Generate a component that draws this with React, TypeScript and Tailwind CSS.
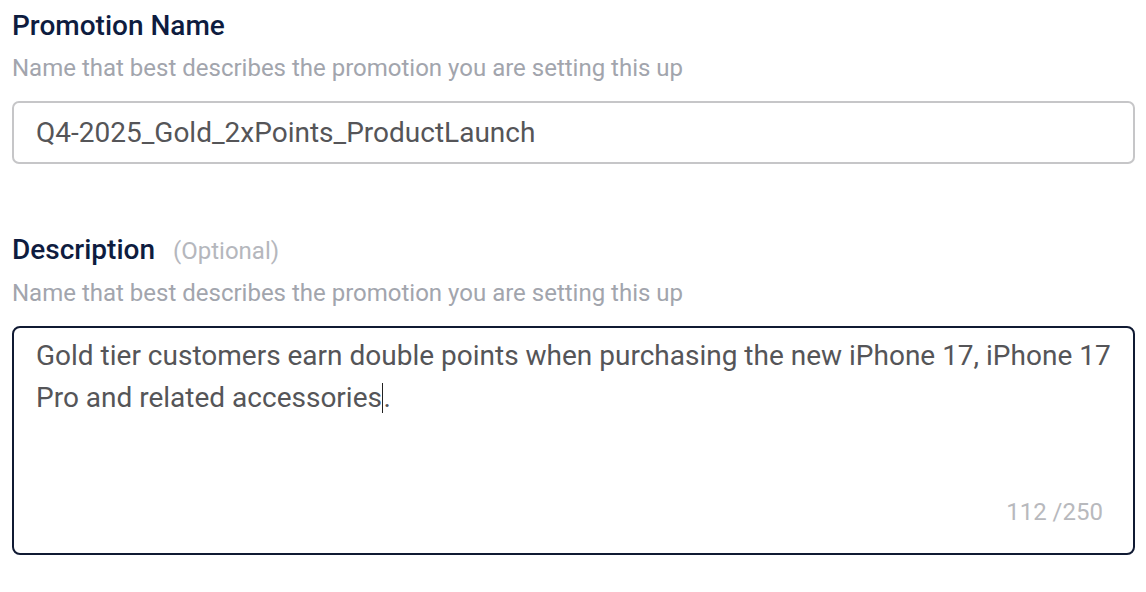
import React from "react";

const Field = ({
    label,
    optional,
    hint,
    children,
}: {
    label: string;
    optional?: boolean;
    hint: string;
    children: React.ReactNode;
}) => {
    return (
        <div className="flex flex-col">
            <div className="flex items-baseline gap-[18px]">
                <h2 className="text-[28px] leading-[36px] font-medium text-[#0e1c3f]">{label}</h2>
                {optional && <span className="text-[24px] leading-[36px] text-[#b5b7bd]">(Optional)</span>}
            </div>
            <p className="text-[24px] leading-[32px] text-[#a2a5ad] mt-[8px] mb-[17px]">{hint}</p>
            {children}
        </div>
    );
};

export default function App() {
    return (
        <div className="w-[1146px] h-[592px] bg-white px-[12px] pt-[8px] font-['Roboto',sans-serif] overflow-hidden flex flex-col gap-[68px]">
            <Field label="Promotion Name" hint="Name that best describes the promotion you are setting this up">
                <div className="h-[63px] w-[1123px] border-2 border-[#c6c6c8] rounded-[7px] flex items-center pl-[22px]">
                    <span className="text-[28px] text-[#555558]">Q4-2025_Gold_2xPoints_ProductLaunch</span>
                </div>
            </Field>
            <Field label="Description" optional hint="Name that best describes the promotion you are setting this up">
                <div className="h-[229px] w-[1123px] border-2 border-[#101a33] rounded-[8px] flex flex-col px-[22px] pt-[7px] pb-[27px]">
                    <div className="text-[28px] leading-[42px] text-[#555558] whitespace-nowrap">
                        <div>Gold tier customers earn double points when purchasing the new iPhone 17, iPhone 17</div>
                        <div>
                            Pro and related accessories
                            <span className="inline-block w-[1.5px] h-[30px] bg-[#222] align-[-6px]" />
                            .
                        </div>
                    </div>
                    <div className="mt-auto self-end pr-[8px] text-[24px] leading-[28px] text-[#b8b9bd]">112 /250</div>
                </div>
            </Field>
        </div>
    );
}
